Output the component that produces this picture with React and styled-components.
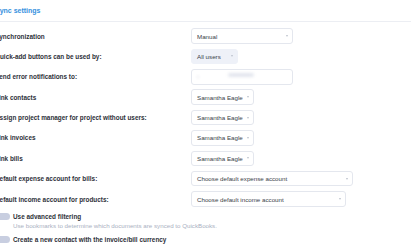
import React from "react";
import styled, { createGlobalStyle } from "styled-components";

const GlobalStyle = createGlobalStyle`
  html, body { margin: 0; padding: 0; background: #ffffff; overflow: hidden; }
  body { font-family: "Liberation Sans", Arial, sans-serif; -webkit-font-smoothing: antialiased; }
`;

const Page = styled.div`
  width: 430px;
  margin-left: -5px;
`;

const Header = styled.div`
  padding: 6px 0 5px 0;
  border-bottom: 1px solid #eceef3;
`;

const Title = styled.div`
  font-size: 7px;
  line-height: 10px;
  font-weight: 700;
  color: #3591de;
`;

const Form = styled.div`
  padding-top: 6px;
  display: flex;
  flex-direction: column;
  gap: 4.375px;
`;

const Row = styled.div`
  display: grid;
  grid-template-columns: 196px auto;
  align-items: center;
  min-height: 16px;
`;

const Label = styled.div`
  font-size: 6.4px;
  font-weight: 700;
  color: #2d3038;
  white-space: nowrap;
`;

const Select = styled.div`
  position: relative;
  box-sizing: border-box;
  width: ${(p) => p.$w}px;
  height: 15.5px;
  display: flex;
  align-items: center;
  padding-left: 5px;
  border-radius: 3px;
  border: 1px solid ${(p) => (p.$soft ? "#eef1f8" : "#e4e7ee")};
  background: ${(p) => (p.$soft ? "#eef1f8" : "#ffffff")};
  font-size: 6.2px;
  color: #3a3e48;
  white-space: nowrap;
`;

const Caret = styled.span`
  position: absolute;
  right: 4px;
  top: 50%;
  margin-top: -1px;
  width: 0;
  height: 0;
  border-left: 1.6px solid transparent;
  border-right: 1.6px solid transparent;
  border-top: 2px solid #bcc1cc;
`;

const Blur = styled.div`
  position: absolute;
  left: ${(p) => p.$x}px;
  top: ${(p) => p.$y}px;
  width: ${(p) => p.$w}px;
  height: ${(p) => p.$h}px;
  border-radius: 3px;
  background: ${(p) => p.$c};
  filter: blur(1.5px);
`;

const Toggles = styled.div`
  padding-top: 4px;
  display: flex;
  flex-direction: column;
`;

const ToggleRow = styled.div`
  display: flex;
  align-items: center;
  gap: 3px;
  height: 10px;
  margin-left: -1px;
`;

const Switch = styled.span`
  position: relative;
  width: 16px;
  height: 7px;
  border-radius: 4px;
  background: #c8cee0;
  flex: none;
`;

const Knob = styled.span`
  position: absolute;
  left: 1px;
  top: 1px;
  width: 5px;
  height: 5px;
  border-radius: 50%;
  background: #ffffff;
`;

const ToggleText = styled.span`
  font-size: 6.4px;
  font-weight: 700;
  color: #2d3038;
  white-space: nowrap;
`;

const Hint = styled.div`
  padding-left: 18px;
  font-size: 6.2px;
  line-height: 10px;
  color: #a9b0c1;
  white-space: nowrap;
  margin-bottom: 3px;
`;

const rows = [
  { label: "Synchronization", value: "Manual", w: 102 },
  { label: "Quick-add buttons can be used by:", value: "All users", w: 47, soft: true },
  { label: "Send error notifications to:", value: "", w: 102, blurred: true },
  { label: "Link contacts", value: "Samantha Eagle", w: 63 },
  { label: "Assign project manager for project without users:", value: "Samantha Eagle", w: 63 },
  { label: "Link invoices", value: "Samantha Eagle", w: 63 },
  { label: "Link bills", value: "Samantha Eagle", w: 63 },
  { label: "Default expense account for bills:", value: "Choose default expense account", w: 162 },
  { label: "Default income account for products:", value: "Choose default income account", w: 155 },
];

export default function App() {
  return (
    <>
      <GlobalStyle />
      <Page>
        <Header>
          <Title>Sync settings</Title>
        </Header>
        <Form>
          {rows.map((r) => (
            <Row key={r.label}>
              <Label>{r.label}</Label>
              <Select $w={r.w} $soft={r.soft}>
                {r.value}
                {r.blurred && (
                  <>
                    <Blur $x={5} $y={6} $w={2} $h={2} $c="#dfe2ea" />
                    <Blur $x={36} $y={3} $w={26} $h={4} $c="#e3e6ee" />
                  </>
                )}
                {!r.blurred && <Caret />}
              </Select>
            </Row>
          ))}
        </Form>
        <Toggles>
          <ToggleRow>
            <Switch><Knob /></Switch>
            <ToggleText>Use advanced filtering</ToggleText>
          </ToggleRow>
          <Hint>Use bookmarks to determine which documents are synced to QuickBooks.</Hint>
          <ToggleRow>
            <Switch><Knob /></Switch>
            <ToggleText>Create a new contact with the invoice/bill currency</ToggleText>
          </ToggleRow>
        </Toggles>
      </Page>
    </>
  );
}
